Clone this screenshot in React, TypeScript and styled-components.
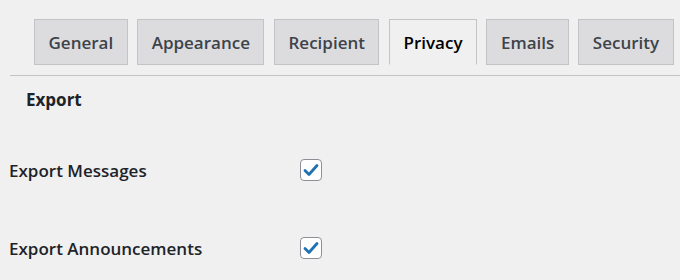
import { createGlobalStyle, styled } from "styled-components"

const GlobalStyle = createGlobalStyle`
  html, body {
    margin: 0;
    padding: 0;
    background: #f0f0f1;
  }
  body {
    font-family: "Open Sans", "Noto Sans", sans-serif;
    color: #1d2327;
  }
`

const tabs = ["General", "Appearance", "Recipient", "Privacy", "Emails", "Security"]
const active = "Privacy"

const rows = ["Export Messages", "Export Announcements"]

const Check = () => (
  <svg width="16" height="14" viewBox="0 0 16 14">
    <path d="M2 7.5 L6 11.5 L14 2.5" fill="none" stroke="#2271b1" strokeWidth="2.8" strokeLinecap="round" strokeLinejoin="round" />
  </svg>
)

const App = () => {
  return (
    <Page>
      <GlobalStyle />
      <TabBar>
        {tabs.map((t) => (
          <Tab key={t} $active={t === active}>
            {t}
          </Tab>
        ))}
      </TabBar>
      <Heading>Export</Heading>
      <Table>
        {rows.map((r) => (
          <Row key={r}>
            <Label>{r}</Label>
            <Box>
              <Check />
            </Box>
          </Row>
        ))}
      </Table>
    </Page>
  )
}

export default App

const Page = styled.div`
  width: 680px;
  height: 280px;
  overflow: hidden;
  padding-left: 10px;
  box-sizing: border-box;
`

const TabBar = styled.div`
  display: flex;
  gap: 9.5px;
  padding: 19px 0 10px 24px;
  border-bottom: 1px solid #c3c4c7;
`

const Tab = styled.div<{ $active: boolean }>`
  height: 46px;
  box-sizing: border-box;
  display: flex;
  align-items: center;
  padding: 0 13.5px;
  border: 1px solid #c3c4c7;
  border-bottom-color: ${(p) => (p.$active ? "#f0f0f1" : "#c3c4c7")};
  background: ${(p) => (p.$active ? "#f0f0f1" : "#dcdcde")};
  color: ${(p) => (p.$active ? "#000" : "#3c434a")};
  font-size: 17px;
  font-weight: 600;
  white-space: nowrap;
`

const Heading = styled.div`
  font-size: 17px;
  font-weight: 700;
  padding: 12px 0 0 16px;
  line-height: 24px;
`

const Table = styled.div`
  display: flex;
  flex-direction: column;
  gap: 54px;
  padding-top: 46px;
  margin-left: -1px;
`

const Row = styled.div`
  display: flex;
  align-items: center;
  height: 24px;
`

const Label = styled.div`
  width: 291px;
  font-size: 17px;
  font-weight: 600;
`

const Box = styled.span`
  width: 22px;
  height: 22px;
  box-sizing: border-box;
  border: 1.5px solid #8c8f94;
  border-radius: 4px;
  background: #fff;
  display: flex;
  align-items: center;
  justify-content: center;
`
